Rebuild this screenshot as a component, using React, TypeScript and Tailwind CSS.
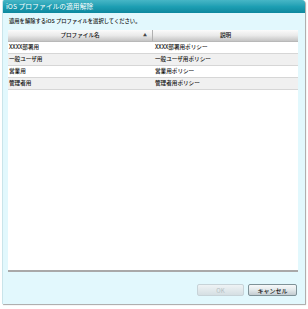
import React from "react";

const rows = [
  ["XXXX部署用", "XXXX部署用ポリシー"],
  ["一般ユーザ用", "一般ユーザ用ポリシー"],
  ["営業用", "営業用ポリシー"],
  ["管理者用", "管理者用ポリシー"],
];

export default function App() {
  return (
    <div
      className="w-[308px] h-[309px] bg-white relative overflow-hidden"
      style={{ fontFamily: '"Noto Sans CJK JP", "Noto Sans", sans-serif' }}
    >
      <div className="ml-[2px] w-[303px] h-[304px] flex flex-col rounded-tr-[3px] rounded-tl-[2px] overflow-hidden bg-[#e2f8fd] shadow-[1px_1px_1px_rgba(0,0,0,0.35)] border-l border-[#c9e4ea]">
        <div className="h-[13px] shrink-0 bg-gradient-to-b from-[#46b6c6] via-[#1e9fb3] to-[#0d889e] flex items-center pl-[3px] text-white text-[6.8px] leading-none">
          iOS プロファイルの適用解除
        </div>
        <div className="flex-1 flex flex-col pl-[5px] pr-[7px]">
          <div className="h-[17px] flex items-center pl-[1px] text-[5.3px] font-medium leading-none text-[#111]">
            適用を解除するiOS プロファイルを選択してください。
          </div>
          <div className="h-[242px] bg-white border-b-2 border-[#a9a9a9] flex flex-col text-[5.6px] font-medium leading-none text-[#111]">
            <div className="h-[12px] flex bg-gradient-to-b from-[#fbfbfb] via-[#e9e9e9] to-[#c4c4c4] border-b border-[#b8b8b8]">
              <div className="w-[145px] relative flex items-center justify-center border-r border-[#b0b0b0]">
                プロファイル名
                <span className="absolute right-[5px] top-[3px] text-[4px] text-[#444]">▲</span>
              </div>
              <div className="flex-1 flex items-center justify-center">説明</div>
            </div>
            {rows.map((r, i) => (
              <div
                key={i}
                className={`h-[12px] flex border-b border-[#d6d6d6] ${i % 2 === 1 ? "bg-[#f0f0f0]" : "bg-white"}`}
              >
                <div className="w-[145px] flex items-center pl-[1px]">{r[0]}</div>
                <div className="flex-1 flex items-center pl-[2px]">{r[1]}</div>
              </div>
            ))}
          </div>
          <div className="flex justify-end gap-[4px] mt-[12px] pr-[1px]">
            <div className="w-[47px] h-[12px] rounded-[2px] border border-[#c7d3d8] bg-gradient-to-b from-[#eef3f5] to-[#d5dfe3] flex items-center justify-center text-[6px] text-[#b5bfc3]">
              OK
            </div>
            <div className="w-[49px] h-[12px] rounded-[2px] border border-[#7f9298] bg-gradient-to-b from-[#f7f9fa] via-[#e2e8ea] to-[#c3ccd0] flex items-center justify-center text-[6px] font-medium text-[#111]">
              キャンセル
            </div>
          </div>
        </div>
      </div>
    </div>
  );
}
